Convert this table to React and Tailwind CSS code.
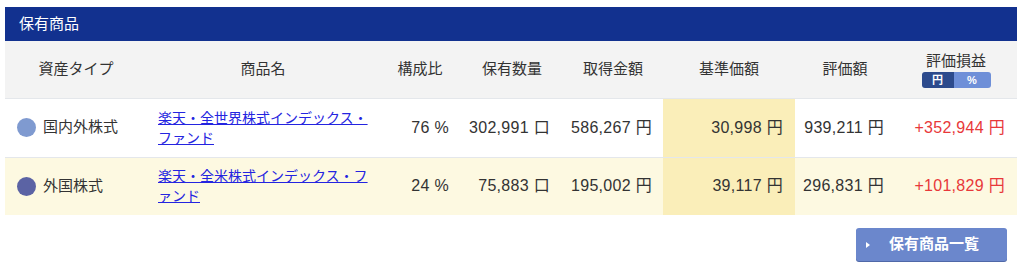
import React from "react";

const font = { fontFamily: '"Liberation Sans", "Noto Sans CJK JP", sans-serif' };

const rows = [
  {
    color: "bg-[#7f9ad0]",
    type: "国内外株式",
    name: "楽天・全世界株式インデックス・ファンド",
    ratio: "76 %",
    qty: "302,991 口",
    cost: "586,267 円",
    base: "30,998 円",
    value: "939,211 円",
    pl: "+352,944 円",
    rowBg: "bg-white",
  },
  {
    color: "bg-[#5b63a4]",
    type: "外国株式",
    name: "楽天・全米株式インデックス・ファンド",
    ratio: "24 %",
    qty: "75,883 口",
    cost: "195,002 円",
    base: "39,117 円",
    value: "296,831 円",
    pl: "+101,829 円",
    rowBg: "bg-[#fdf9e1]",
  },
];

export default function App() {
  return (
    <div className="w-[1024px] h-[269px] bg-white pt-[7px] px-[5px] text-[#333]" style={font}>
      <div className="w-[1012px]">
        <div className="h-[34px] bg-[#12318f] text-white text-[15px] flex items-center pl-[14px]">
          保有商品
        </div>
        <table className="w-[1012px] table-fixed border-collapse text-[15px]">
          <colgroup>
            <col className="w-[142px]" />
            <col className="w-[232px]" />
            <col className="w-[82px]" />
            <col className="w-[102px]" />
            <col className="w-[100px]" />
            <col className="w-[132px]" />
            <col className="w-[100px]" />
            <col className="w-[122px]" />
          </colgroup>
          <thead>
            <tr className="bg-[#f3f3f3] h-[57px] border-b border-[#e4e7eb]">
              <th className="font-normal text-center">資産タイプ</th>
              <th className="font-normal text-center">商品名</th>
              <th className="font-normal text-center">構成比</th>
              <th className="font-normal text-center">保有数量</th>
              <th className="font-normal text-center">取得金額</th>
              <th className="font-normal text-center">基準価額</th>
              <th className="font-normal text-center">評価額</th>
              <th className="font-normal text-center">
                <div className="flex flex-col items-center pt-[2px]">
                  <span className="leading-[18px]">評価損益</span>
                  <div className="mt-[2px] flex h-[16px] w-[69px] rounded-[3px] overflow-hidden text-[11px] font-bold text-white leading-[16px]">
                    <span className="w-[32px] bg-[#2c4a8c]">円</span>
                    <span className="flex-1 bg-[#6e8fd8]">%</span>
                  </div>
                </div>
              </th>
            </tr>
          </thead>
          <tbody>
            {rows.map((r, i) => (
              <tr
                key={i}
                className={`${r.rowBg} ${i === 0 ? "h-[59px] border-b border-[#e4e7eb]" : "h-[58px]"}`}
              >
                <td className="pl-[12px]">
                  <div className="flex items-center gap-[7px]">
                    <span className={`w-[19px] h-[19px] rounded-full ${r.color}`} />
                    <span>{r.type}</span>
                  </div>
                </td>
                <td className="pl-[11px] pr-[10px]">
                  <a href="#" className="text-[14px] leading-[20px] text-[#2424e0] underline block">
                    {r.name}
                  </a>
                </td>
                <td className="text-right pr-[12px] text-[16px] tracking-[0.3px]">{r.ratio}</td>
                <td className="text-right pr-[13px] text-[16px] tracking-[0.3px]">{r.qty}</td>
                <td className="text-right pr-[11px] text-[16px] tracking-[0.3px]">{r.cost}</td>
                <td className="text-right pr-[12px] text-[16px] tracking-[0.3px] bg-[#faeeb9]">{r.base}</td>
                <td className="text-right pr-[11px] text-[16px] tracking-[0.3px]">{r.value}</td>
                <td className="text-right pr-[12px] text-[16px] tracking-[0.3px] text-[#e8383a]">{r.pl}</td>
              </tr>
            ))}
          </tbody>
        </table>
        <div className="flex justify-end pr-[10px] pt-[13px]">
          <button className="w-[151px] h-[33px] rounded-[3px] bg-[#6b87cc] shadow-[0_1px_0_#4f68a8] text-white text-[15px] font-bold flex items-center pl-[10px]">
            <span className="w-0 h-0 border-y-[3px] border-y-transparent border-l-[4px] border-l-white" />
            <span className="ml-[19px]">保有商品一覧</span>
          </button>
        </div>
      </div>
    </div>
  );
}
